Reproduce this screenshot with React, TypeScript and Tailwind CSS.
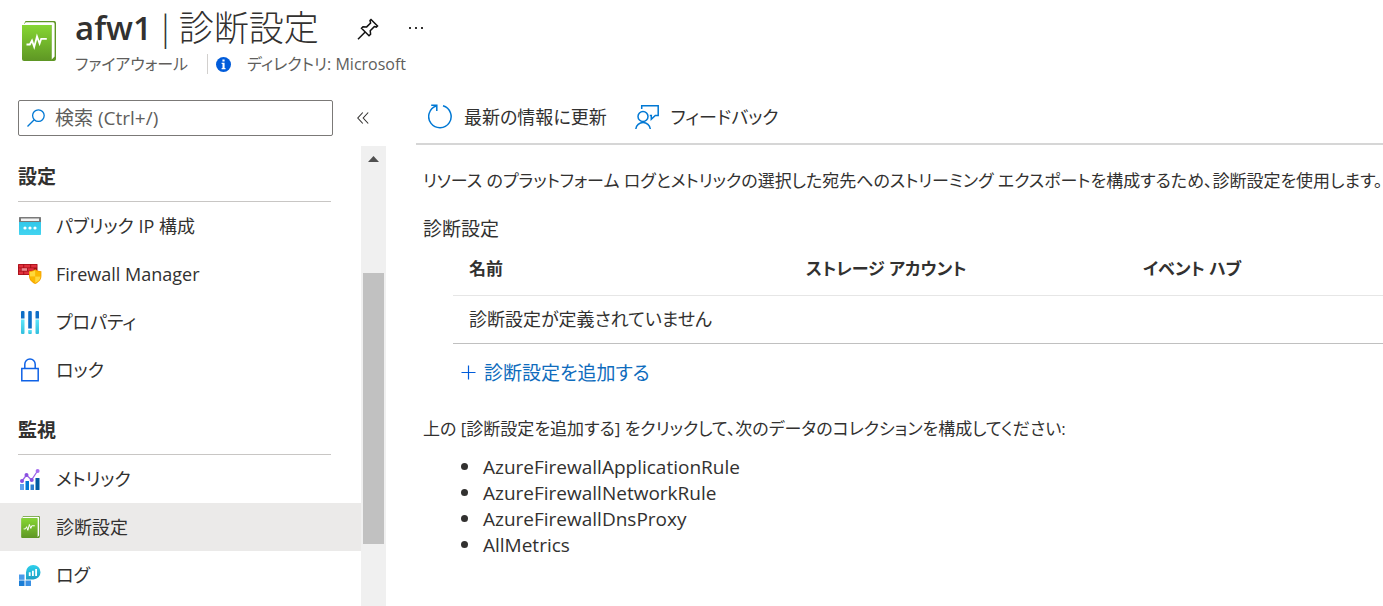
import type { ReactNode } from "react";

function BookIcon({ className, id }: { className: string; id: string }) {
  return (
    <svg viewBox="0 0 34 40" className={className} aria-hidden="true">
      <defs>
        <linearGradient id={id} x1="0" y1="0" x2="0" y2="1">
          <stop offset="0" stopColor="#86d633" />
          <stop offset="1" stopColor="#5e9624" />
        </linearGradient>
      </defs>
      <path d="M3.5 0H31.5A2.3 2.3 0 0 1 34 2.4V37.5A2.3 2.3 0 0 1 31.6 40H2V3Z" fill="#5e9624" />
      <path d="M3.8 1.2H31A1.7 1.7 0 0 1 32.6 3V35.5L29.5 38.8V4H1.2Z" fill="#fff" />
      <path d="M0 4H29.5V40H2A2 2 0 0 1 0 38Z" fill={`url(#${id})`} />
      <path d="M4.5 23.5H7.8L10 19.5L12.2 26L15 15.5L17.6 22.5L19.2 17.8H24.8" fill="none" stroke="#fff" strokeWidth="1.8" />
    </svg>
  );
}

function PinIcon() {
  return (
    <svg viewBox="0 0 22 22" className="h-[22px] w-[22px]" fill="none" stroke="#111" strokeWidth="1.5" aria-hidden="true">
      <path d="M14 1.5L20.5 8L19.3 9.1L17.3 8.6L13.2 12.7L13.6 16.2L12 17.8L4.5 10.3L6 8.7L9.7 8.9L13.6 5L13 2.5Z" />
      <path d="M8.2 14L1 21.2" />
    </svg>
  );
}

function InfoIcon() {
  return (
    <svg viewBox="0 0 15 15" className="h-[15px] w-[15px]" aria-hidden="true">
      <circle cx="7.5" cy="7.5" r="7.5" fill="#015cda" />
      <path d="M6.4 2.5h2.2v2H6.4zM5.6 5.8h3v5.2h.9v1.2h-3.9v-1.2h.9v-4h-.9z" fill="#fff" />
    </svg>
  );
}

function SearchIcon() {
  return (
    <svg viewBox="0 0 18 18" className="h-[18px] w-[18px] shrink-0" fill="none" stroke="#0078d4" strokeWidth="1.3" aria-hidden="true">
      <circle cx="11.4" cy="6.6" r="5.8" />
      <path d="M7.2 10.8L.5 17.5" />
    </svg>
  );
}

function CollapseIcon() {
  return (
    <svg viewBox="0 0 12 12" className="h-3 w-3" fill="none" stroke="#323130" strokeWidth="1.1" aria-hidden="true">
      <path d="M5.8.5L.8 6L5.8 11.5M11.2.5L6.2 6L11.2 11.5" />
    </svg>
  );
}

function RefreshIcon() {
  return (
    <svg viewBox="0 0 24 25" className="h-[25px] w-6" fill="none" stroke="#0078d4" strokeWidth="1.5" aria-hidden="true">
      <path d="M15 1.8A11.2 11.2 0 1 1 8.2 2" />
      <path d="M3.2 1.2H8.8V7" />
    </svg>
  );
}

function FeedbackIcon() {
  return (
    <svg viewBox="0 0 24 24" className="h-6 w-6" fill="none" stroke="#0078d4" strokeWidth="1.5" aria-hidden="true">
      <circle cx="8" cy="11.5" r="5" />
      <path d="M.8 24A7.3 7.3 0 0 1 15.3 24" />
      <path d="M6.7 4V.8H23.2V10.4H20.3L16.3 14.2V10.4H14.8" />
    </svg>
  );
}

function PublicIpIcon() {
  return (
    <svg viewBox="0 0 22 18" className="h-[18px] w-[22px]" aria-hidden="true">
      <defs>
        <linearGradient id="ip" x1="0" y1="0" x2="0" y2="1">
          <stop offset="0" stopColor="#32c8ea" />
          <stop offset="1" stopColor="#42d4f0" />
        </linearGradient>
      </defs>
      <path d="M0 5H22V17.3A.7.7 0 0 1 21.3 18H.7A.7.7 0 0 1 0 17.3Z" fill="url(#ip)" />
      <path d="M.7 0H21.3A.7.7 0 0 1 22 .7V5H0V.7A.7.7 0 0 1 .7 0Z" fill="#7a7a7a" />
      <path d="M2 1.5H20V4H2Z" fill="#f3f3f3" />
      <g fill="#fff">
        <circle cx="6" cy="11" r="1.6" />
        <circle cx="11" cy="11" r="1.6" />
        <circle cx="16" cy="11" r="1.6" />
      </g>
    </svg>
  );
}

function FirewallIcon() {
  return (
    <svg viewBox="0 0 24 20" className="h-5 w-6" aria-hidden="true">
      <rect width="19.5" height="11" rx=".6" fill="#a30d16" />
      <g fill="#e0303c">
        <path d="M.8.8h4.5v2.6H.8zM6.2.8h6v2.6h-6zM13.2.8h5.5v2.6h-5.5zM.8 4.2h2v2.6h-2zM10 4.2h5.8v2.6H10zM.8 7.6h4.5v2.6H.8zM6.2 7.6h6v2.6h-6z" />
      </g>
      <path d="M3.6 4.2h5.5v2.6H3.6z" fill="#ef8a90" />
      <path d="M17.2 5.3C19.3 7 21.4 7.1 23.4 7.3V12C23.4 16 20.4 18.5 17.2 20C14 18.5 11 16 11 12V7.3C13 7.1 15.1 7 17.2 5.3Z" fill="#f5a300" />
      <path d="M17.2 6.3C19 7.6 20.7 8 22.5 8.1V12.5H17.2ZM17.2 12.5V19C14.4 17.6 12.1 15.7 11.9 12.5Z" fill="#fbb800" />
      <path d="M17.2 6.3V12.5H11.9V8.1C13.7 8 15.4 7.6 17.2 6.3ZM17.2 12.5H22.5C22.3 15.7 20 17.6 17.2 19Z" fill="#ffd93b" />
    </svg>
  );
}

function PropertiesIcon() {
  return (
    <svg viewBox="0 0 18 23" className="h-[23px] w-[18px]" aria-hidden="true">
      <defs>
        <linearGradient id="bars" x1="0" y1="0" x2="0" y2="1">
          <stop offset="0" stopColor="#5ee6fa" />
          <stop offset="1" stopColor="#32bedd" />
        </linearGradient>
      </defs>
      <g fill="#0f6fc6">
        <path d="M0 1A1 1 0 0 1 1 0H2.5A1 1 0 0 1 3.5 1V7.5H0ZM7.2 1A1 1 0 0 1 8.2 0H9.8A1 1 0 0 1 10.8 1V17.5H7.2ZM14.5 1A1 1 0 0 1 15.5 0H17A1 1 0 0 1 18 1V7.5H14.5Z" />
      </g>
      <g fill="url(#bars)">
        <path d="M0 8.5H3.5V22A1 1 0 0 1 2.5 23H1A1 1 0 0 1 0 22ZM14.5 8.5H18V22A1 1 0 0 1 17 23H15.5A1 1 0 0 1 14.5 22Z" />
        <path d="M7.2 19H10.8V22A1 1 0 0 1 9.8 23H8.2A1 1 0 0 1 7.2 22Z" />
      </g>
    </svg>
  );
}

function LockIcon() {
  return (
    <svg viewBox="0 0 18 24" className="h-6 w-[18px]" fill="none" stroke="#0f62e6" strokeWidth="1.5" aria-hidden="true">
      <path d="M.8 10.5H17.2V22.7H.8ZM3.8 10.5V6.2A5.2 5.2 0 0 1 14.2 6.2V10.5" />
    </svg>
  );
}

function MetricsIcon() {
  return (
    <svg viewBox="0 0 20 21" className="h-[21px] w-5" aria-hidden="true">
      <path d="M0 15H4V21H.5A.5.5 0 0 1 0 20.5Z" fill="#5ea0ef" />
      <path d="M5.5 12H9V21H5.5Z" fill="#0078d4" />
      <path d="M10.5 15.5H14V21H10.5Z" fill="#2f7fd0" />
      <path d="M15.5 9H19.5V20.5A.5.5 0 0 1 19 21H15.5Z" fill="#005ba1" />
      <path d="M2 12L6.5 6L11.5 11L17.5 2" fill="none" stroke="#9a63e8" strokeWidth="1.3" />
      <g fill="#8a4fe0">
        <circle cx="2" cy="12" r="2" />
        <circle cx="6.5" cy="6" r="2" />
        <circle cx="11.7" cy="11" r="2" />
      </g>
      <circle cx="17.6" cy="2" r="2" fill="#a66df0" />
    </svg>
  );
}

function LogsIcon() {
  return (
    <svg viewBox="0 0 22 21" className="h-[21px] w-[22px]" aria-hidden="true">
      <defs>
        <linearGradient id="logs" x1="0" y1="0" x2="0" y2="1">
          <stop offset="0" stopColor="#2ed0ec" />
          <stop offset="1" stopColor="#1e9fc4" />
        </linearGradient>
      </defs>
      <path d="M0 9.5H5.5V14.8H0Z" fill="#4a9bea" />
      <path d="M0 15.6H5.5V21H.5A.5.5 0 0 1 0 20.5Z" fill="#1a7dd6" />
      <path d="M6.5 15.6H12V20.5A.5.5 0 0 1 11.5 21H6.5Z" fill="#3a90e4" />
      <path d="M14.3 0A7.2 7.2 0 1 1 14.3 14.4H7V7.2A7.2 7.2 0 0 1 14.3 0Z" fill="url(#logs)" />
      <path d="M9.8 7.3h1.8v3.6H9.8zM13 5.7h1.8v5.2H13zM16.2 3.9H18v7h-1.8z" fill="#fff" />
    </svg>
  );
}

function PlusIcon() {
  return (
    <svg viewBox="0 0 15 15" className="h-[15px] w-[15px]" stroke="#015cda" strokeWidth="1.2" aria-hidden="true">
      <path d="M7.5 .5V14.5M.5 7.5H14.5" />
    </svg>
  );
}

type Item = { label: string; icon: ReactNode; active?: boolean };

const sections: { title: string; items: Item[] }[] = [
  {
    title: "設定",
    items: [
      { label: "パブリック IP 構成", icon: <PublicIpIcon /> },
      { label: "Firewall Manager", icon: <FirewallIcon /> },
      { label: "プロパティ", icon: <PropertiesIcon /> },
      { label: "ロック", icon: <LockIcon /> },
    ],
  },
  {
    title: "監視",
    items: [
      { label: "メトリック", icon: <MetricsIcon /> },
      { label: "診断設定", icon: <BookIcon className="h-[22px] w-[19px]" id="book-small" />, active: true },
      { label: "ログ", icon: <LogsIcon /> },
    ],
  },
];

const categories = [
  "AzureFirewallApplicationRule",
  "AzureFirewallNetworkRule",
  "AzureFirewallDnsProxy",
  "AllMetrics",
];

function Header() {
  return (
    <header className="flex h-[90px] items-start pl-[22px]">
      <BookIcon className="mt-[21px] h-10 w-[34px] shrink-0" id="book-large" />
      <div className="pl-[19px]">
        <div className="flex h-[52px] items-center pt-1">
          <h1 className="flex items-center gap-1 text-[35px] leading-10">
            <span className="text-[33px] font-semibold">afw1</span>
            <span className="font-light">|</span>
            <span className="font-light">診断設定</span>
          </h1>
          <button type="button" aria-label="ピン留め" className="ml-[38px] pt-0.5">
            <PinIcon />
          </button>
          <button type="button" aria-label="その他" className="ml-[30px] flex gap-1">
            <span className="h-0.5 w-0.5 bg-[#323130]" />
            <span className="h-0.5 w-0.5 bg-[#323130]" />
            <span className="h-0.5 w-0.5 bg-[#323130]" />
          </button>
        </div>
        <div className="flex h-6 items-center text-base text-[#605e5c]">
          <span className="w-[132px]">ファイアウォール</span>
          <span className="mr-2 h-5 w-px bg-[#d2d0ce]" />
          <InfoIcon />
          <span className="pl-4">ディレクトリ: Microsoft</span>
        </div>
      </div>
    </header>
  );
}

function Sidebar() {
  return (
    <aside className="flex w-[386px] shrink-0 flex-col">
      <div className="flex h-14 items-start pt-2.5 pl-[18px]">
        <label className="flex h-9 w-[315px] items-center gap-2.5 rounded-xs border border-[#7b7977] px-2">
          <SearchIcon />
          <input
            type="search"
            aria-label="検索"
            placeholder="検索 (Ctrl+/)"
            className="min-w-0 flex-1 bg-transparent outline-none placeholder:text-[#605e5c]"
          />
        </label>
        <button type="button" aria-label="メニューを折りたたむ" className="mt-3 ml-6">
          <CollapseIcon />
        </button>
      </div>
      <div className="flex flex-1">
        <nav className="flex flex-1 flex-col gap-[5px]">
          {sections.map((section) => (
            <section key={section.title}>
              <h2 className="mr-[30px] ml-[18px] flex h-14 items-end border-b border-[#c8c6c4] pb-2.5 font-bold leading-7">
                {section.title}
              </h2>
              <ul className="text-lg">
                {section.items.map((item) => (
                  <li key={item.label}>
                    <a
                      href="#"
                      aria-current={item.active ? "page" : undefined}
                      className={
                        item.active
                          ? "flex h-12 items-center bg-[#ebeae9] pl-[18px]"
                          : "flex h-12 items-center pl-[18px]"
                      }
                    >
                      <span className="mr-3.5 flex w-6 justify-center">{item.icon}</span>
                      {item.label}
                    </a>
                  </li>
                ))}
              </ul>
            </section>
          ))}
        </nav>
        <div className="flex w-[25px] flex-col items-center bg-[#f0f0f0] pt-2.5" aria-hidden="true">
          <svg viewBox="0 0 11 6" className="h-1.5 w-[11px]">
            <path d="M5.5 0L11 6H0Z" fill="#505050" />
          </svg>
          <div className="mt-[111px] h-[271px] w-[21px] bg-[#c1c1c1]" />
        </div>
      </div>
    </aside>
  );
}

function Main() {
  return (
    <main className="ml-[30px] min-w-0 flex-1">
      <div className="flex h-[55px] items-center gap-7 border-b-2 border-[#d6d6d6] pl-3 text-lg">
        <button type="button" className="flex items-center gap-3">
          <RefreshIcon />
          最新の情報に更新
        </button>
        <button type="button" className="flex items-center gap-3">
          <FeedbackIcon />
          フィードバック
        </button>
      </div>
      <div className="pl-[7px]">
        <p className="pt-[22px] text-[17px] leading-7 whitespace-nowrap">
          リソース のプラットフォーム ログとメトリックの選択した宛先へのストリーミング エクスポートを構成するため、診断設定を使用します。
        </p>
        <h2 className="pt-5 leading-7">診断設定</h2>
        <div className="pl-[30px]">
          <table className="w-full table-fixed text-left">
            <thead>
              <tr className="h-[52px] border-b border-[#e6e6e6] text-[17px]">
                <th className="w-[337px] pl-4 font-bold">名前</th>
                <th className="w-[337px] pl-4 font-bold">ストレージ アカウント</th>
                <th className="pl-4 font-bold">イベント ハブ</th>
              </tr>
            </thead>
            <tbody>
              <tr className="h-12 border-b border-[#c0c0c0] text-lg">
                <td className="pl-4" colSpan={3}>
                  診断設定が定義されていません
                </td>
              </tr>
            </tbody>
          </table>
          <a href="#" className="flex items-center gap-2 pt-[15px] pl-2 leading-7 text-[#0f6cbd]">
            <PlusIcon />
            診断設定を追加する
          </a>
        </div>
        <p className="pt-7 text-[17px] leading-7">
          上の [診断設定を追加する] をクリックして、次のデータのコレクションを構成してください:
        </p>
        <ul className="pt-[11px]">
          {categories.map((name) => (
            <li key={name} className="flex items-center leading-[26px]">
              <span className="mr-[15px] ml-[38px] h-[7px] w-[7px] rounded-full bg-[#323130]" />
              {name}
            </li>
          ))}
        </ul>
      </div>
    </main>
  );
}

export default function App() {
  return (
    <div className="flex min-h-screen flex-col overflow-hidden bg-white font-['Open_Sans','Noto_Sans_CJK_JP',sans-serif] text-[19px] text-[#323130] [font-feature-settings:'palt']">
      <Header />
      <div className="flex flex-1">
        <Sidebar />
        <Main />
      </div>
    </div>
  );
}
